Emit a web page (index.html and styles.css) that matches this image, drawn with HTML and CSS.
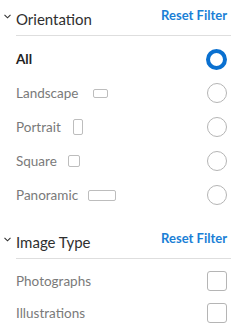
FILE: index.html
```html
<!DOCTYPE html>
<html>
<head>
<meta charset="utf-8">
<link rel="stylesheet" href="styles.css">
</head>
<body>
<div class="panel">
  <section class="section">
    <div class="head">
      <span class="chev"><svg width="7" height="5" viewBox="0 0 7 5"><path d="M0.5 0.8 L3.5 3.8 L6.5 0.8" fill="none" stroke="#333" stroke-width="1.1"/></svg></span>
      <span class="title">Orientation</span>
      <a class="reset">Reset Filter</a>
    </div>
    <ul class="list">
      <li class="row radio-row"><span class="label strong">All</span><span class="radio on"></span></li>
      <li class="row radio-row"><span class="label">Landscape</span><span class="shape landscape"></span><span class="radio"></span></li>
      <li class="row radio-row"><span class="label">Portrait</span><span class="shape portrait"></span><span class="radio"></span></li>
      <li class="row radio-row"><span class="label">Square</span><span class="shape square"></span><span class="radio"></span></li>
      <li class="row radio-row"><span class="label">Panoramic</span><span class="shape panoramic"></span><span class="radio"></span></li>
    </ul>
  </section>
  <section class="section second">
    <div class="head">
      <span class="chev"><svg width="7" height="5" viewBox="0 0 7 5"><path d="M0.5 0.8 L3.5 3.8 L6.5 0.8" fill="none" stroke="#333" stroke-width="1.1"/></svg></span>
      <span class="title">Image Type</span>
      <a class="reset">Reset Filter</a>
    </div>
    <ul class="list">
      <li class="row check-row"><span class="label">Photographs</span><span class="check"></span></li>
      <li class="row check-row"><span class="label">Illustrations</span><span class="check"></span></li>
    </ul>
  </section>
</div>
</body>
</html>
```
FILE: styles.css
```css
html, body { margin: 0; padding: 0; background: #fff; }
body { font-family: "Lato", "Liberation Sans", sans-serif; color: #333; }
.panel { padding: 0 4px 0 4px; }
.section.second { margin-top: 11px; }
.head {
  display: flex;
  align-items: flex-end;
  height: 36px;
  box-sizing: border-box;
  padding-bottom: 7px;
  position: relative;
}
.head::after {
  content: "";
  position: absolute;
  left: 12px; right: -4px; bottom: 0;
  border-bottom: 1px solid #dedede;
}
.chev { width: 12px; display: flex; align-items: center; height: 20px; padding-bottom: 5px; box-sizing: border-box; }
.title { font-size: 15px; line-height: 20px; color: #2f2f2f; flex: 1; }
.reset { font-size: 13px; font-weight: 700; color: #1b7fd6; line-height: 20px; padding-bottom: 4px; }
.list { list-style: none; margin: 0; padding: 6px 0 0 12px; }
.row { display: flex; align-items: center; }
.radio-row { height: 34px; }
.check-row { height: 32px; }
.label { font-size: 13.5px; color: #7a7a7a; }
.label.strong { font-weight: 700; color: #222; }
.shape { border: 1px solid #bdbdbd; border-radius: 2px; box-sizing: border-box; }
.landscape { width: 15px; height: 9px; margin-left: 15px; }
.portrait { width: 10px; height: 16px; margin-left: 12px; }
.square { width: 12px; height: 12px; margin-left: 11px; }
.panoramic { width: 28px; height: 11px; margin-left: 10px; }
.radio {
  margin-left: auto;
  width: 20px; height: 20px;
  border: 1px solid #b5b5b5;
  border-radius: 50%;
  box-sizing: border-box;
}
.radio.on { width: 21px; height: 21px; border: 4px solid #0a70d0; }
.check {
  margin-left: auto;
  width: 20px; height: 20px;
  border: 1px solid #b5b5b5;
  border-radius: 3px;
  box-sizing: border-box;
}
```
